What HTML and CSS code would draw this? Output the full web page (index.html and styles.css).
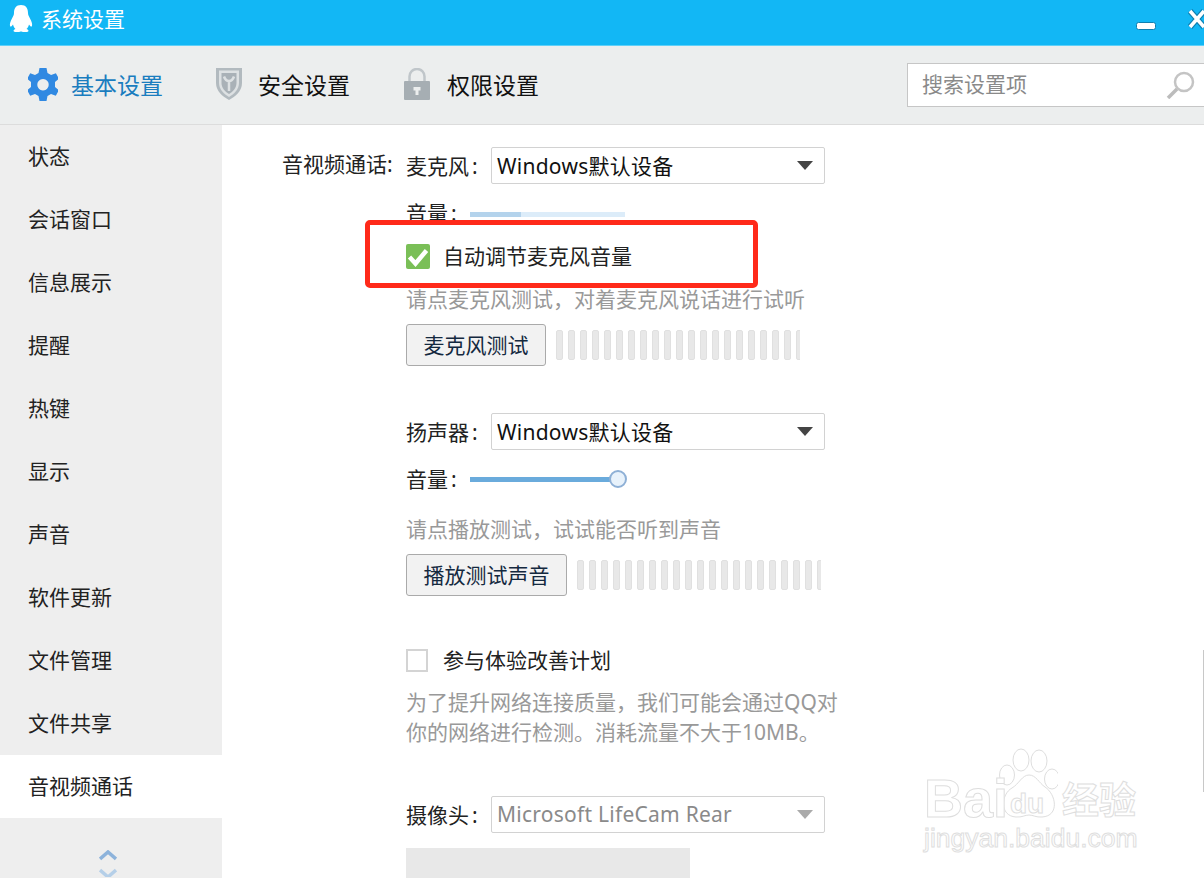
FILE: index.html
```html
<!DOCTYPE html>
<html lang="zh-CN">
<head>
    <meta charset="UTF-8">
    <title>系统设置</title>
    <link rel="stylesheet" href="styles.css">
</head>
<body>
    <div class="window">
        <div class="titlebar">
            <svg class="qq-logo" viewBox="0 0 24 27" width="24" height="27">
                <path fill="#fff" d="M12 0C7 0 5 3.5 5 8C5 10 4 11.500 3 13.500C1.500 16 .5 19 1 21C1.500 22.500 3 21 4 19.500C4.500 21.500 5.500 23 6.500 24C5.500 24.300 4.500 25 4.500 26C4.500 27 7 27 9 27C10.500 27 11.500 26.500 12 26.500C12.500 26.500 13.500 27 15 27C17 27 19.500 27 19.500 26C19.500 25 18.500 24.300 17.500 24C18.500 23 19.500 21.500 20 19.500C21 21 22.500 22.500 23 21C23.500 19 22.500 16 21 13.500C20 11.500 19 10 19 8C19 3.500 17 0 12 0Z"/>
            </svg>
            <span class="title-text">系统设置</span>
            <div class="win-controls">
                <svg class="win-min" viewBox="0 0 20 8" width="20" height="8">
                    <rect x=".5" y=".5" width="19" height="7" rx="2" fill="#fff" stroke="#0f7fb0" stroke-width="1"/>
                </svg>
                <svg class="win-close" viewBox="0 0 18 22" width="18" height="22">
                    <path d="M2 3l14 16M16 3L2 19" stroke="#0f7fb0" stroke-width="6" fill="none"/>
                    <path d="M2 3l14 16M16 3L2 19" stroke="#fff" stroke-width="3.500" fill="none"/>
                </svg>
            </div>
        </div>

        <div class="toolbar">
            <div class="tab active">
                <svg class="tab-icon" viewBox="0 0 30 34" width="30" height="34">
                    <path fill="#3089e2" fill-rule="evenodd" d="M11.500 0h7l1 5 3.600 2 4.800-1.700 3.100 5.400L27 14v5l3.900 3.300-3.100 5.400-4.800-1.700-3.500 2-1 5h-7l-1-5-3.500-2-4.800 1.700-3.100-5.400L3 19v-5L-.9 10.700l3.100-5.400L7 7l3.500-2zM15 11a5.700 5.700 0 1 0 .01 0z"/>
                </svg>
                <span>基本设置</span>
            </div>
            <div class="tab">
                <svg class="tab-icon shield" viewBox="0 0 26 32" width="26" height="32">
                    <path fill="#b2babf" d="M0 0h26v15c0 8-6.500 13.500-13 17C6.500 28.500 0 23 0 15z"/>
                    <path fill="#dde1e3" d="M3 2.500h20V15c0 6.500-5 11-10 14C8 26 3 21.500 3 15z"/>
                    <path fill="#a9b1b7" d="M5.500 5h15v10c0 5-3.500 8.500-7.500 11-4-2.500-7.500-6-7.500-11z"/>
                    <path fill="none" stroke="#dde1e3" stroke-width="2.500" d="M8 8.500c1 3 3 4.500 5 4.500s4-1.500 5-4.500M13 13v10"/>
                </svg>
                <span>安全设置</span>
            </div>
            <div class="tab">
                <svg class="tab-icon lock" viewBox="0 0 28 32" width="28" height="32">
                    <path fill="none" stroke="#c0c6ca" stroke-width="2.500" d="M6.500 14V8.500a7.500 7.500 0 0 1 15 0V14"/>
                    <rect x="1" y="13" width="26" height="19" rx="1" fill="#a6aeb3"/>
                    <path fill="#eceeee" d="M10.500 19h7v3.500h-2V27h-3v-4.500h-2z"/>
                </svg>
                <span>权限设置</span>
            </div>
            <div class="search">
                <span class="search-text">搜索设置项</span>
                <svg class="search-icon" viewBox="0 0 30 28" width="30" height="28">
                    <circle cx="18" cy="11" r="9" fill="none" stroke="#c4c4c4" stroke-width="2.500"/>
                    <path d="M11 18l-9 9" stroke="#bcbcbc" stroke-width="3.500"/>
                </svg>
            </div>
        </div>

        <div class="content">
            <ul class="sidebar">
                <li>状态</li>
                <li>会话窗口</li>
                <li>信息展示</li>
                <li>提醒</li>
                <li>热键</li>
                <li>显示</li>
                <li>声音</li>
                <li>软件更新</li>
                <li>文件管理</li>
                <li>文件共享</li>
                <li class="current">音视频通话</li>
                <li class="pager">
                    <svg viewBox="0 0 18 27" width="18" height="27">
                        <path d="M1 9l8-7 8 7" fill="none" stroke="#8db3db" stroke-width="3.500"/>
                        <path d="M1 20l8 7 8-7" fill="none" stroke="#b5cfe8" stroke-width="3.500"/>
                    </svg>
                </li>
            </ul>

            <div class="main">
                <div class="section-label">音视频通话:</div>
                <div class="group">
                    <div class="row device">
                        <span class="field-label">麦克风<span class="colon">:</span></span>
                        <div class="select"><span>Windows默认设备</span><i class="caret"></i></div>
                    </div>
                    <div class="row volume first-volume">
                        <span class="volume-label">音量<span class="colon">:</span></span>
                        <div class="slider pale"><div class="slider-fill" style="width: 33%"></div></div>
                    </div>
                    <label class="row check auto-check">
                        <span class="box checked">
                            <svg viewBox="0 0 24 25" width="24" height="25">
                                <path d="M3.500 13l6 6.500L20.500 6.500" fill="none" stroke="#fff" stroke-width="4.500"/>
                            </svg>
                        </span>
                        <span class="check-text">自动调节麦克风音量</span>
                    </label>
                    <p class="hint mic-hint">请点麦克风测试，对着麦克风说话进行试听</p>
                    <div class="row test mic-test">
                        <button class="btn mic-btn">麦克风测试</button>
                        <div class="meter">
                            <i></i><i></i><i></i><i></i><i></i><i></i><i></i><i></i><i></i><i></i><i></i>
                            <i></i><i></i><i></i><i></i><i></i><i></i><i></i><i></i><i></i><i></i>
                        </div>
                    </div>

                    <div class="row device speaker">
                        <span class="field-label">扬声器<span class="colon">:</span></span>
                        <div class="select"><span>Windows默认设备</span><i class="caret"></i></div>
                    </div>
                    <div class="row volume">
                        <span class="volume-label">音量<span class="colon">:</span></span>
                        <div class="slider"><div class="slider-fill" style="width: 95%"></div><i class="thumb"></i></div>
                    </div>
                    <p class="hint play-hint">请点播放测试，试试能否听到声音</p>
                    <div class="row test">
                        <button class="btn play-btn">播放测试声音</button>
                        <div class="meter">
                            <i></i><i></i><i></i><i></i><i></i><i></i><i></i><i></i><i></i><i></i><i></i>
                            <i></i><i></i><i></i><i></i><i></i><i></i><i></i><i></i><i></i><i></i>
                        </div>
                    </div>

                    <label class="row check plan-check">
                        <span class="box"></span>
                        <span class="check-text">参与体验改善计划</span>
                    </label>
                    <p class="hint plan-hint">为了提升网络连接质量，我们可能会通过QQ对<br>你的网络进行检测。消耗流量不大于10MB。</p>

                    <div class="row device camera">
                        <span class="field-label">摄像头<span class="colon">:</span></span>
                        <div class="select disabled"><span>Microsoft LifeCam Rear</span><i class="caret"></i></div>
                    </div>
                    <div class="preview"></div>
                </div>
            </div>
        </div>

        <div class="highlight"></div>
        <div class="edge-line"></div>

        <div class="watermark">
            <svg class="paw" viewBox="0 0 60 72" width="60" height="72">
                <g fill="#fff" stroke="#dedede" stroke-width="1">
                    <ellipse cx="9" cy="27" rx="7.500" ry="10"/>
                    <ellipse cx="23" cy="12" rx="8" ry="11"/>
                    <ellipse cx="41" cy="13" rx="8" ry="11"/>
                    <ellipse cx="54" cy="31" rx="7.500" ry="10"/>
                    <path d="M31 27C38 27 41 35 47 39C58 46 62 68 44 69C38 69.500 35 67 31 67C27 67 24 69.500 18 69C1 68 3 46 14 40C21 36 24 27 31 27Z"/>
                </g>
            </svg>
            <span class="wm-bai">Bai</span>
            <span class="wm-du">du</span>
            <span class="wm-cn">经验</span>
            <span class="wm-url">jingyan.baidu.com</span>
        </div>
    </div>
</body>
</html>
```

FILE: styles.css
```css
* {
    box-sizing: border-box;
}

body {
    margin: 0;
    padding: 0;
    font-family: "Noto Sans", "Noto Sans CJK SC", sans-serif;
    font-size: 21px;
    color: #222;
}

.window {
    position: relative;
    width: 1204px;
    height: 878px;
    overflow: hidden;
    background: #fff;
}

.titlebar {
    display: flex;
    align-items: center;
    height: 45px;
    padding-left: 9px;
    padding-bottom: 8px;
    background: #12b7f5;
    color: #fff;
}

.qq-logo {
    margin-right: 8px;
}

.title-text {
    line-height: 30px;
}

.win-controls {
    display: flex;
    align-items: flex-start;
    align-self: flex-start;
    margin-left: auto;
    margin-right: -2px;
}

.win-min {
    margin-top: 22px;
    margin-right: 32px;
}

.win-close {
    margin-top: 8px;
}

.toolbar {
    display: flex;
    align-items: center;
    height: 80px;
    padding-left: 28px;
    background: #eceeee;
    border-bottom: 1px solid #dcdcdc;
    border-top: 1px solid #5fd0f8;
}

.tab {
    display: flex;
    align-items: center;
    margin-right: 53px;
    font-size: 23px;
    color: #111;
}

.tab span {
    padding-bottom: 2px;
}

.tab.active {
    color: #1a7dbf;
}

.tab-icon {
    margin-right: 13px;
}

.tab-icon.shield {
    margin-right: 16px;
    margin-top: -3px;
}

.tab-icon.lock {
    margin-right: 16px;
    margin-top: -2px;
}

.search {
    display: flex;
    align-items: center;
    justify-content: space-between;
    width: 300px;
    height: 44px;
    margin-left: auto;
    margin-right: -3px;
    padding: 0 10px 0 14px;
    background: #fff;
    border: 1px solid #c6c6c6;
    color: #8a8a8a;
}

.search-text {
    padding-bottom: 4px;
}

.content {
    display: flex;
    height: 753px;
}

.sidebar {
    width: 222px;
    margin: 0;
    padding: 0;
    flex-shrink: 0;
    list-style: none;
    background: #eeeeee;
}

.sidebar li {
    height: 63px;
    padding-left: 28px;
    line-height: 62px;
}

.sidebar li.current {
    background: #fff;
}

.sidebar li.pager {
    padding-left: 99px;
    padding-top: 32px;
    line-height: 0;
}

.main {
    display: flex;
    flex: 1;
    padding-left: 60px;
    padding-top: 22px;
}

.section-label {
    width: 124px;
    height: 37px;
    line-height: 35px;
    white-space: nowrap;
}

.group {
    width: 500px;
}

.row {
    display: flex;
    align-items: center;
}

.device {
    height: 37px;
}

.field-label {
    width: 85px;
    padding-bottom: 2px;
}

.colon {
    margin-left: 3px;
}

.select {
    display: flex;
    align-items: center;
    justify-content: space-between;
    width: 334px;
    height: 37px;
    padding: 0 11px 2px 5px;
    border: 1px solid #d2d2d2;
    border-radius: 2px;
    background: #fff;
    color: #111;
    letter-spacing: 0.25px;
}

.select.disabled {
    color: #8a8a8a;
}

.caret {
    width: 0;
    height: 0;
    margin-top: 2px;
    border-left: 8px solid transparent;
    border-right: 8px solid transparent;
    border-top: 9px solid #444;
}

.select.disabled .caret {
    border-top-color: #aaa;
}

.volume {
    height: 30px;
    margin-top: 14px;
}

.volume-label {
    width: 64px;
    padding-bottom: 2px;
}

.slider {
    position: relative;
    width: 155px;
    height: 5px;
    background: #dcecf9;
}

.slider.pale {
    margin-top: 3px;
}

.slider-fill {
    height: 100%;
    background: #6aabdc;
}

.slider.pale .slider-fill {
    background: #b4d3ec;
}

.thumb {
    position: absolute;
    right: -2px;
    top: -7px;
    width: 18px;
    height: 18px;
    border: 2px solid #8eb0d6;
    border-radius: 50%;
    background: #e8f2fb;
}

.check {
    height: 26px;
    cursor: pointer;
}

.check-text {
    padding-bottom: 2px;
}

.auto-check {
    gap: 13px;
    margin-top: 15px;
}

.plan-check {
    gap: 15px;
    margin-top: 51px;
}

.box {
    width: 22px;
    height: 23px;
    border: 2px solid #d4d4d4;
    background: #fff;
}

.box.checked {
    width: 24px;
    height: 25px;
    border: 0;
    border-radius: 2px;
    background: #7abf57;
}

.box svg {
    display: block;
}

.hint {
    margin: 0;
    line-height: 30px;
    color: #999;
}

.mic-hint {
    margin-top: 15px;
    padding-bottom: 1px;
}

.play-hint {
    margin-top: 20px;
    padding-bottom: 1px;
}

.plan-hint {
    margin-top: 14px;
    padding-bottom: 1px;
    width: 460px;
}

.test {
    gap: 10px;
    margin-top: 9px;
}

.btn {
    height: 42px;
    padding: 0 0 2px;
    border: 1px solid #aaa;
    border-radius: 3px;
    background: #f2f2f2;
    font: inherit;
    color: #14293f;
}

.mic-btn {
    width: 140px;
}

.play-btn {
    width: 161px;
}

.meter {
    display: flex;
    gap: 5px;
    width: 244px;
    height: 30px;
    overflow: hidden;
}

.meter i {
    flex-shrink: 0;
    width: 7px;
    height: 30px;
    border: 1px solid #e0e0e0;
    border-radius: 2px;
    background: #e8e8e8;
}

.speaker {
    margin-top: 47px;
}

.camera {
    margin-top: 48px;
}

.preview {
    width: 284px;
    height: 60px;
    margin-top: 15px;
    background: #e8e8e8;
}

.highlight {
    position: absolute;
    left: 365px;
    top: 220px;
    width: 393px;
    height: 68px;
    border: 5px solid #ff2a1a;
    border-radius: 5px;
}

.edge-line {
    position: absolute;
    left: 1203px;
    top: 650px;
    width: 1px;
    height: 142px;
    background: #c8c8c8;
}

.watermark {
    position: absolute;
    left: 920px;
    top: 745px;
    width: 224px;
    height: 112px;
    color: #fff;
    font-family: "Liberation Sans", sans-serif;
    font-weight: bold;
    -webkit-text-stroke: 1px #dedede;
}

.watermark span {
    position: absolute;
    line-height: 1;
}

.paw {
    position: absolute;
    left: 78px;
    top: 3px;
}

.watermark .wm-bai {
    left: 4px;
    top: 31px;
    font-size: 54px;
    line-height: 44px;
}

.wm-du {
    left: 90px;
    top: 45px;
    font-size: 28px;
}

.wm-cn {
    left: 142px;
    top: 35px;
    font-family: "Noto Sans CJK SC", sans-serif;
    font-size: 37px;
}

.wm-url {
    left: 4px;
    top: 80px;
    font-size: 26.5px;
    font-weight: normal;
}
```
